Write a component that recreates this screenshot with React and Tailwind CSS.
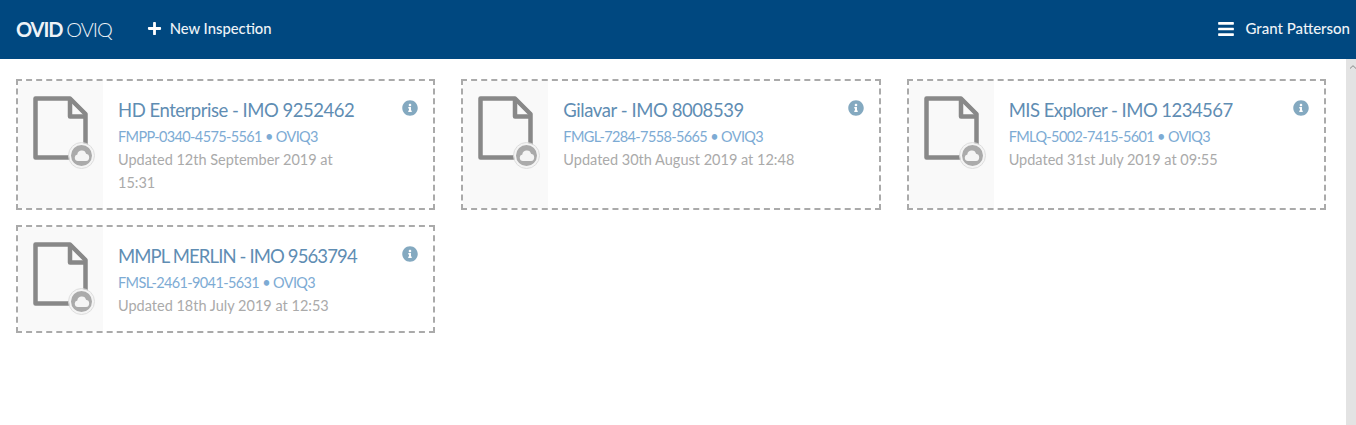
import { FaPlus, FaBars, FaInfoCircle } from 'react-icons/fa';

const inspections = [
  { name: 'HD Enterprise - IMO 9252462', tracking: 'tracking-[-0.48px]', code: 'FMPP-0340-4575-5561 • OVIQ3', updated: 'Updated 12th September 2019 at 15:31' },
  { name: 'Gilavar - IMO 8008539', tracking: 'tracking-[-0.43px]', code: 'FMGL-7284-7558-5665 • OVIQ3', updated: 'Updated 30th August 2019 at 12:48' },
  { name: 'MIS Explorer - IMO 1234567', tracking: 'tracking-[-0.54px]', code: 'FMLQ-5002-7415-5601 • OVIQ3', updated: 'Updated 31st July 2019 at 09:55' },
  { name: 'MMPL MERLIN - IMO 9563794', tracking: 'tracking-[-0.88px]', code: 'FMSL-2461-9041-5631 • OVIQ3', updated: 'Updated 18th July 2019 at 12:53' },
];

function FileCloudIcon() {
  return (
    <div className="relative w-[64px] h-[74px]">
      <svg width="55" height="64" viewBox="0 0 55 64" fill="none" stroke="#888888" strokeWidth="4.500" strokeLinejoin="round" className="absolute left-0 top-0">
        <path d="M2.500 2.500H37L52.500 18V61.500H2.500Z" />
        <path d="M37 2.500V20.500H52.500" />
      </svg>
      <div className="absolute left-[36px] top-[47px] w-[25px] h-[25px] rounded-full bg-[#aaaaaa] border-2 border-[#f4f4f4] outline outline-[#dddddd] flex items-center justify-center">
        <svg width="16" height="11" viewBox="0 0 17 12" fill="#f4f4f4">
          <path d="M4 12a3.600 3.600 0 0 1-.6-7.100A4.600 4.600 0 0 1 8.500.5a4.600 4.600 0 0 1 4.400 3.600A4 4 0 0 1 13 12Z" />
        </svg>
      </div>
    </div>
  );
}

function InspectionCard({ name, tracking, code, updated }) {
  return (
    <div className="flex border-2 border-dashed border-[#aaaaaa] bg-white">
      <div className="w-[85px] shrink-0 bg-[#f9f9f9] pl-[15px] pt-[15px]">
        <FileCloudIcon />
      </div>
      <div className="flex-1 min-w-0 pl-[15px] pr-[64px] pt-[17px] pb-[14px] relative">
        <div className={`text-[18.500px] leading-[24px] text-[#5f8db3] whitespace-nowrap ${tracking}`}>{name}</div>
        <div className="text-[14.500px] leading-[20px] mt-[5px] tracking-[-0.63px] text-[#7dabd4] whitespace-nowrap">{code}</div>
        <div className="text-[14.500px] leading-[23px] mt-[1px] text-[#aaaaaa]">{updated}</div>
        <FaInfoCircle size={16} className="absolute right-[15px] top-[19px] text-[#84a9c0]" />
      </div>
    </div>
  );
}

export default function App() {
  return (
    <div className="h-[425px] flex flex-col overflow-hidden bg-white font-['Lato',sans-serif]">
      <header className="h-[59px] shrink-0 bg-[#004880] flex items-center pl-[16px] pr-[6px] pb-[2px] text-[#eef3f7]">
        <div className="text-[20px] tracking-[-1.1px] whitespace-nowrap">
          <span className="font-bold">OVID</span> <span className="font-light">OVIQ</span>
        </div>
        <div className="flex items-center ml-[35px]">
          <FaPlus size={15} className="text-white" />
          <span className="ml-[8px] text-[14.800px] font-medium">New Inspection</span>
        </div>
        <div className="flex items-center ml-auto">
          <FaBars size={18} className="text-white" />
          <span className="ml-[10px] text-[15px] font-medium">Grant Patterson</span>
        </div>
      </header>
      <div className="flex-1 flex min-h-0">
        <main className="flex-1 pl-[16px] pr-[20px] pt-[20px]">
          <div className="grid grid-cols-3 gap-x-[26px] gap-y-[15px]">
            {inspections.map((item) => (
              <InspectionCard key={item.code} {...item} />
            ))}
          </div>
        </main>
        <div className="w-[10px] shrink-0 bg-[#e3e3e3] pl-[4px] pt-[6px]">
          <svg width="6" height="4" viewBox="0 0 6 4" fill="none" stroke="#888888" strokeWidth="1" className="block">
            <path d="M0 3.500L3 .7L6 3.500" />
          </svg>
        </div>
      </div>
    </div>
  );
}
